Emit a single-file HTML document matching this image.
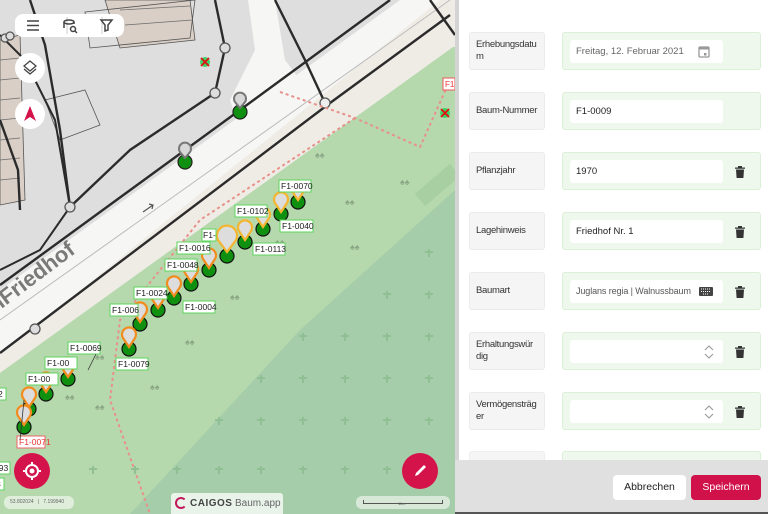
<!DOCTYPE html>
<html><head><meta charset="utf-8"><style>
*{box-sizing:border-box;margin:0;padding:0}
body{width:768px;height:514px;overflow:hidden;font-family:"Liberation Sans",sans-serif;background:#e0e0e0;position:relative}
#map{position:absolute;left:0;top:0;width:455px;height:514px;overflow:hidden;background:#dedede}
#panel{position:absolute;left:455px;top:0;width:313px;height:514px;background:#e0e0e0}
#inner{position:absolute;left:4px;top:0;width:309px;height:460px;background:#fff;overflow:hidden}
.row{position:absolute;left:10px;width:292px;height:38px}
.lab{position:absolute;left:0;top:0;width:76px;height:38px;background:#f5f5f5;border:1px solid #ebebeb;border-radius:3px;font-size:9.5px;color:#333;padding:0 6px;display:flex;align-items:center;line-height:12px;letter-spacing:-0.3px;white-space:nowrap}
.fld{position:absolute;left:93px;top:0;width:199px;height:38px;background:#eef8ec;border:1px solid #dcefd8;border-radius:3px}
.inp{position:absolute;left:7px;top:7px;width:153px;height:23px;background:#fff;border-radius:3px;font-size:9.5px;color:#222;padding-left:6px;line-height:23px;white-space:nowrap}
.trash{position:absolute;left:172px;top:13px;width:10px;height:12px}
.btn{position:absolute;top:475px;height:25px;border-radius:4px;font-size:10.5px;line-height:25px;text-align:center}
.tb{position:absolute;background:#fff;border-radius:8px}
.circ{position:absolute;width:30px;height:30px;border-radius:50%;background:#fff}
.fab{position:absolute;width:36px;height:36px;border-radius:50%;background:#d4134a}
</style></head><body>
<div id="map">
<svg width="455" height="514" viewBox="0 0 455 514" font-family="Liberation Sans" >
<rect width="455" height="514" fill="#dedede"/>
<g fill="#d9cfc6" stroke="#555" stroke-width="0.8">
<polygon points="0,40 20,35 25,200 0,205"/>
<polygon points="105,0 190,0 195,40 120,48"/>
<polygon points="85,12 195,0 190,38 90,48" fill="none"/>
<polygon points="45,100 85,90 100,125 60,140" fill="none"/>
</g>
<g stroke="#6b6b6b" stroke-width="0.7"><line x1="0" y1="60" x2="20" y2="58"/><line x1="0" y1="80" x2="20" y2="78"/><line x1="0" y1="100" x2="20" y2="98"/><line x1="0" y1="120" x2="20" y2="118"/><line x1="0" y1="140" x2="20" y2="138"/><line x1="0" y1="160" x2="20" y2="158"/><line x1="0" y1="180" x2="20" y2="178"/><line x1="120" y1="10" x2="190" y2="6"/><line x1="125" y1="25" x2="192" y2="20"/></g>
<polygon points="0,300 420,0 455,0 455,47 0,373" fill="#efece6"/>
<polygon points="0,290 400,0 440,0 0,355" fill="#f6f6f5"/>
<polygon points="248,0 275,0 285,60 300,80 240,130 230,100 255,50" fill="#f6f6f5"/>
<polygon points="0,373 453,47 455,47 455,514 0,514" fill="#b5d9ad"/>
<polygon points="455,190 455,514 130,514 300,330" fill="#a6cdaa"/>
<line x1="420" y1="200" x2="455" y2="170" stroke="#a8cfa2" stroke-width="16"/>
<g stroke="#2b2b2b" stroke-width="2.4" fill="none">
<polyline points="0,285 240,110 390,0"/>
<polyline points="0,353 330,103 450,15"/>
<line x1="0" y1="320" x2="450" y2="0" stroke-width="1" stroke="#bbb"/>
<polyline points="30,0 45,45 60,130 70,207"/>
<polyline points="0,35 25,60 55,120 70,207 40,250 0,270" stroke-width="2"/>
<polyline points="215,0 225,48 215,93 130,150 70,207"/>
<polyline points="275,0 305,60 325,103"/>
<polyline points="430,0 455,35"/>
<polyline points="0,120 18,170 20,210"/>
</g>
<g fill="none" stroke="#555" stroke-width="1.3">
<circle cx="225" cy="48" r="5" fill="#ddd"/><circle cx="215" cy="93" r="5" fill="#ddd"/><circle cx="325" cy="103" r="5" fill="#eee"/><circle cx="70" cy="207" r="5" fill="#ddd"/><circle cx="35" cy="329" r="5" fill="#ddd"/><circle cx="5" cy="38" r="4" fill="#ddd"/><circle cx="10" cy="36" r="4" fill="#ddd"/>
</g>
<g stroke="#e8908a" stroke-width="2" stroke-dasharray="3,3" fill="none">
<polyline points="280,92 355,118 420,147 450,80"/>
<polyline points="355,118 200,220 120,320 110,400 150,514"/>
</g>
<text transform="translate(0,300) rotate(-37)" font-size="22" font-weight="bold" fill="#7a7a7a" x="-18" y="8">mFriedhof</text>
<path d="M143,212 l10,-7 m-4,-1 l4,1 -1,4" stroke="#555" stroke-width="1.2" fill="none"/>
<g stroke="#8fbf92" stroke-width="2" fill="none">
<path d="M303,333v8M299,336h8M345,333v8M341,336h8M387,333v8M383,336h8M429,333v8M425,336h8M261,375v8M257,378h8M303,375v8M299,378h8M345,375v8M341,378h8M387,375v8M383,378h8M429,375v8M425,378h8M219,417v8M215,420h8M261,417v8M257,420h8M303,417v8M299,420h8M345,417v8M341,420h8M387,417v8M383,420h8M429,417v8M425,420h8M93,466v8M89,469h8M135,466v8M131,469h8M177,466v8M173,469h8M219,466v8M215,469h8M261,466v8M257,469h8M303,466v8M299,469h8M345,466v8M341,469h8M387,466v8M383,469h8M429,466v8M425,469h8M387,291v8M383,294h8M429,291v8M425,294h8M429,249v8M425,252h8"/>
</g>
<g fill="#111" font-size="9" fill-opacity=".25"><text x="315" y="158">♠♠</text><text x="345" y="205">♠♠</text><text x="275" y="245">♠♠</text><text x="230" y="300">♠♠</text><text x="185" y="345">♠♠</text><text x="95" y="360">♠♠</text><text x="150" y="390">♠♠</text><text x="65" y="400">♠♠</text><text x="95" y="410">♠♠</text><text x="400" y="185">♠♠</text><text x="350" y="250">♠♠</text></g>
<g><circle cx="205" cy="62" r="5" fill="#3ed36a"/><path d="M201,58l8,8M209,58l-8,8" stroke="#e01010" stroke-width="1.8"/>
<circle cx="445" cy="113" r="5" fill="#3ed36a"/><path d="M441,109l8,8M449,109l-8,8" stroke="#e01010" stroke-width="1.8"/></g>
<rect x="443" y="78" width="12" height="12" fill="#fff" stroke="#e55" /><text x="445" y="87" font-size="8" fill="#e33">F1</text>
<g stroke="#222" stroke-width="1.2"><circle cx="240" cy="112" r="7" fill="#109010"/><circle cx="185" cy="162" r="7" fill="#109010"/></g>
<g fill="#d8d8d8" stroke="#777" stroke-width="2"><path d="M240,108 l-5,-6 a6,6 0 1 1 10,0z"/><path d="M185,158 l-5,-6 a6,6 0 1 1 10,0z"/></g>
<g stroke="#111" stroke-width="1.2" fill="#109010">
<circle cx="298" cy="202" r="7"/><circle cx="281" cy="214" r="7"/><circle cx="263" cy="229" r="7"/><circle cx="245" cy="242" r="7"/><circle cx="227" cy="256" r="7"/><circle cx="209" cy="270" r="7"/><circle cx="191" cy="284" r="7"/><circle cx="174" cy="298" r="7"/><circle cx="158" cy="310" r="7"/><circle cx="140" cy="324" r="7"/><circle cx="129" cy="349" r="7"/><circle cx="68" cy="379" r="7"/><circle cx="46" cy="394" r="7"/><circle cx="29" cy="409" r="7"/><circle cx="24" cy="427" r="7"/>
</g>
<g fill="#ddd" stroke-width="2.2">
<path stroke="#f4b630" d="M298,200 l-6,-9 a7,7 0 1 1 12,0z"/>
<path stroke="#f4b630" d="M281,212 l-6,-9 a7,7 0 1 1 12,0z"/>
<path stroke="#f4b630" d="M263,227 l-6,-9 a7,7 0 1 1 12,0z"/>
<path stroke="#f4b630" d="M245,240 l-6,-9 a7,7 0 1 1 12,0z"/>
<path stroke="#f4b630" d="M227,252 l-9,-12 a10,10 0 1 1 18,0z"/>
<path stroke="#f28c1e" d="M209,268 l-6,-9 a7,7 0 1 1 12,0z"/>
<path stroke="#f28c1e" d="M191,282 l-6,-9 a7,7 0 1 1 12,0z"/>
<path stroke="#f28c1e" d="M174,296 l-6,-9 a7,7 0 1 1 12,0z"/>
<path stroke="#f28c1e" d="M158,308 l-6,-9 a7,7 0 1 1 12,0z"/>
<path stroke="#f28c1e" d="M140,322 l-6,-9 a7,7 0 1 1 12,0z"/>
<path stroke="#f28c1e" d="M129,347 l-6,-9 a7,7 0 1 1 12,0z"/>
<path stroke="#f28c1e" d="M68,377 l-6,-9 a7,7 0 1 1 12,0z"/>
<path stroke="#f28c1e" d="M46,392 l-6,-9 a7,7 0 1 1 12,0z"/>
<path stroke="#f28c1e" d="M29,407 l-6,-9 a7,7 0 1 1 12,0z"/>
<path stroke="#f28c1e" d="M24,425 l-6,-9 a7,7 0 1 1 12,0z"/>
</g>
<g font-size="8.5" fill="#222">
<g fill="#fff" stroke="#5ed35e" stroke-width="1">
<rect x="279" y="180" width="32" height="12"/><rect x="280" y="220" width="33" height="12"/><rect x="235" y="205" width="32" height="12"/><rect x="253" y="243" width="32" height="12"/><rect x="202" y="229" width="14" height="12"/><rect x="177" y="242" width="33" height="12"/><rect x="165" y="259" width="32" height="12"/><rect x="183" y="301" width="32" height="12"/><rect x="134" y="287" width="33" height="12"/><rect x="110" y="304" width="28" height="12"/><rect x="116" y="358" width="32" height="12"/><rect x="68" y="342" width="32" height="12"/><rect x="45" y="357" width="32" height="12"/><rect x="26" y="373" width="32" height="12"/><rect x="-10" y="388" width="16" height="12"/><rect x="-10" y="462" width="20" height="12"/><rect x="-10" y="478" width="14" height="12"/>
</g>
<rect x="17" y="436" width="28" height="12" fill="#fff" stroke="#e66"/>
<text x="281" y="189">F1-0070</text><text x="282" y="229">F1-0040</text><text x="237" y="214">F1-0102</text><text x="255" y="252">F1-0113</text><text x="203" y="238">F1-</text><text x="179" y="251">F1-0016</text><text x="167" y="268">F1-0048</text><text x="185" y="310">F1-0004</text><text x="136" y="296">F1-0024</text><text x="112" y="313">F1-006</text><text x="118" y="367">F1-0079</text><text x="70" y="351">F1-0069</text><text x="47" y="366">F1-00</text><text x="28" y="382">F1-00</text><text x="-2" y="397">2</text><text x="-6" y="471">093</text><text x="-4" y="487">3</text>
<text x="19" y="445" fill="#e33">F1-0071</text>
</g>
<g stroke="#333" stroke-width="0.8"><line x1="96" y1="354" x2="88" y2="370"/><line x1="24" y1="400" x2="20" y2="440"/></g>
</svg>
<div class="tb" style="left:15px;top:14px;width:109px;height:23px">
<svg width="109" height="23" style="position:absolute;left:0;top:0"><g stroke="#444" stroke-width="1.5" fill="none"><path d="M12,7h12M12,11.5h12M12,16h12"/><line x1="52" y1="3" x2="52" y2="20" stroke="#ddd"/><line x1="87" y1="3" x2="87" y2="20" stroke="#ddd"/><ellipse cx="54" cy="8" rx="5" ry="2"/><path d="M49,8v6M59,8v2"/><circle cx="58" cy="15" r="2.5"/><path d="M60,17l2,2"/><path d="M86,6h11l-4,5v5l-3,1v-6z"/></g></svg>
</div>
<div class="circ" style="left:15px;top:53px"><svg width="30" height="30"><path d="M15,8l6,5-6,5-6-5z M9,16l6,5 6-5" fill="none" stroke="#444" stroke-width="1.3"/></svg></div>
<div class="circ" style="left:15px;top:99px"><svg width="30" height="30"><path d="M15,7l6,15-6-4-6,4z" fill="#d4134a"/></svg></div>
<div class="fab" style="left:14px;top:453px"><svg width="36" height="36"><circle cx="18" cy="18" r="6" fill="none" stroke="#fff" stroke-width="2"/><circle cx="18" cy="18" r="2.5" fill="#fff"/><path d="M18,9v3M18,24v3M9,18h3M24,18h3" stroke="#fff" stroke-width="2"/></svg></div>
<div class="fab" style="left:402px;top:453px"><svg width="36" height="36"><path d="M13,23l1,-3 8,-8 2,2 -8,8z" fill="#fff"/></svg></div>
<div style="position:absolute;left:4px;top:496px;width:70px;height:13px;background:rgba(255,255,255,.55);border-radius:6px;font-size:5px;color:#666;line-height:13px;padding-left:6px">53.802024 &nbsp;&nbsp;|&nbsp;&nbsp; 7.199940</div>
<div style="position:absolute;left:171px;top:493px;width:112px;height:21px;background:rgba(255,255,255,.75);border-radius:3px 3px 0 0;font-size:10px;line-height:21px;color:#555">
<span style="position:absolute;left:4px;top:4px;width:12px;height:12px;border:2px solid #c2185b;border-radius:50%;border-right-color:transparent"></span>
<b style="position:absolute;left:19px;letter-spacing:.5px;color:#444">CAIGOS</b><span style="position:absolute;left:64px;color:#666">Baum.app</span></div>
<div style="position:absolute;left:356px;top:496px;width:94px;height:13px;background:rgba(255,255,255,.55);border-radius:6px"><div style="position:absolute;left:7px;top:4px;width:80px;height:4px;border:1px solid #555;border-top:none"></div><span style="position:absolute;left:42px;top:5px;font-size:4px;color:#555">11m</span></div>
</div>
<div id="panel">
<div style="position:absolute;left:0;top:0;width:4px;height:460px;background:#d4d4d4"></div>
<div id="inner">
<div class="row" style="top:32px"><div class="lab">Erhebungsdatu<br>m</div><div class="fld"><div class="inp" style="color:#666">Freitag, 12. Februar 2021<svg style="position:absolute;left:128px;top:5px" width="12" height="13"><rect x="1" y="2" width="10" height="10" rx="1" fill="none" stroke="#999" stroke-width="1.3"/><rect x="1" y="2" width="10" height="2.5" fill="#999"/><rect x="6" y="8" width="2.5" height="2.5" fill="#999"/></svg></div></div></div>
<div class="row" style="top:92px"><div class="lab">Baum-Nummer</div><div class="fld"><div class="inp">F1-0009</div></div></div>
<div class="row" style="top:152px"><div class="lab">Pflanzjahr</div><div class="fld"><div class="inp">1970</div><svg class="trash" viewBox="0 0 10 12"><path d="M0,1.5h10v1.3H0zM3,0h4v1.5H3zM1,3.5h8l-.6,8.5H1.6z" fill="#333"/></svg></div></div>
<div class="row" style="top:212px"><div class="lab">Lagehinweis</div><div class="fld"><div class="inp">Friedhof Nr. 1</div><svg class="trash" viewBox="0 0 10 12"><path d="M0,1.5h10v1.3H0zM3,0h4v1.5H3zM1,3.5h8l-.6,8.5H1.6z" fill="#333"/></svg></div></div>
<div class="row" style="top:272px"><div class="lab">Baumart</div><div class="fld"><div class="inp" style="color:#555;font-size:9px;letter-spacing:-0.1px">Juglans regia | Walnussbaum<svg style="position:absolute;left:129px;top:7px" width="14" height="9"><rect width="14" height="9" rx="1" fill="#444"/><path d="M2,2h10M2,4.5h10M4,7h6" stroke="#fff" stroke-width="1" stroke-dasharray="1,1"/></svg></div><svg class="trash" viewBox="0 0 10 12"><path d="M0,1.5h10v1.3H0zM3,0h4v1.5H3zM1,3.5h8l-.6,8.5H1.6z" fill="#333"/></svg></div></div>
<div class="row" style="top:332px"><div class="lab">Erhaltungswür<br>dig</div><div class="fld"><div class="inp"><svg style="position:absolute;left:134px;top:5px" width="10" height="14"><path d="M1,5l4,-4 4,4M1,9l4,4 4,-4" fill="none" stroke="#999" stroke-width="1.1"/></svg></div><svg class="trash" viewBox="0 0 10 12"><path d="M0,1.5h10v1.3H0zM3,0h4v1.5H3zM1,3.5h8l-.6,8.5H1.6z" fill="#333"/></svg></div></div>
<div class="row" style="top:392px"><div class="lab">Vermögensträg<br>er</div><div class="fld"><div class="inp"><svg style="position:absolute;left:134px;top:5px" width="10" height="14"><path d="M1,5l4,-4 4,4M1,9l4,4 4,-4" fill="none" stroke="#999" stroke-width="1.1"/></svg></div><svg class="trash" viewBox="0 0 10 12"><path d="M0,1.5h10v1.3H0zM3,0h4v1.5H3zM1,3.5h8l-.6,8.5H1.6z" fill="#333"/></svg></div></div>
<div class="row" style="top:451px;height:9px"><div class="lab" style="height:12px;border-color:#eee"></div><div class="fld" style="height:12px"></div></div>
</div>
<div class="btn" style="left:158px;width:73px;background:#fff;color:#222">Abbrechen</div>
<div class="btn" style="left:236px;width:70px;background:#d0114a;color:#fff">Speichern</div>
<div style="position:absolute;left:0;top:512px;width:313px;height:2px;background:#555"></div>
</div>
</body></html>
